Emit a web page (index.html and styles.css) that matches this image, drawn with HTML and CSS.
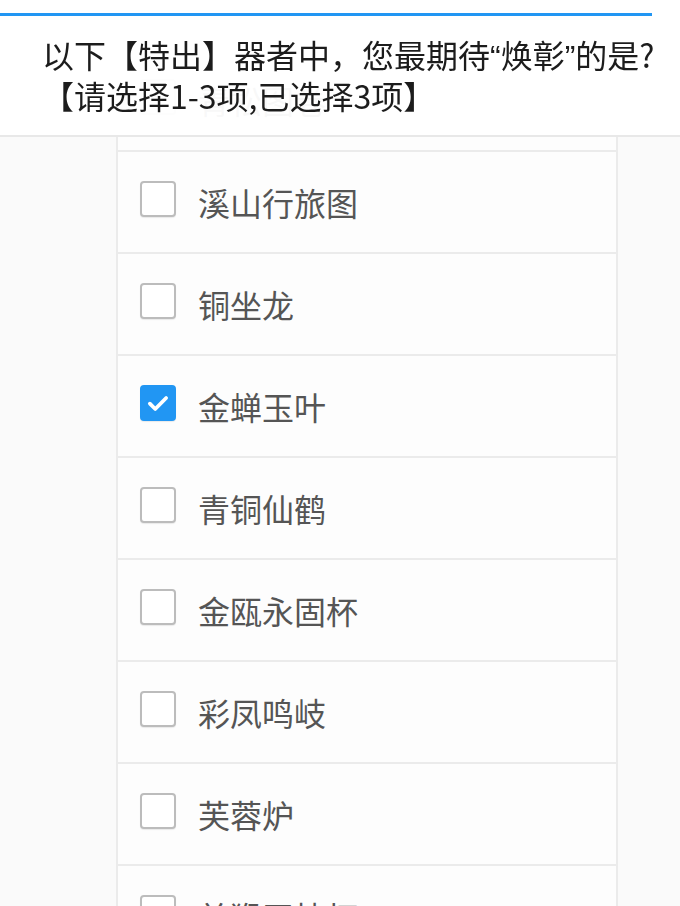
FILE: index.html
```html
<!DOCTYPE html>
<html lang="zh-CN">
<head>
<meta charset="utf-8">
<title>问卷</title>
<link rel="stylesheet" href="styles.css">
</head>
<body>
<header class="topbar">
  <div class="progress"></div>
  <h1 class="question">以下【特出】器者中，您最期待<span class="q">“</span>焕彰<span class="q">”</span>的是?<br>【请选择1-3项,已选择3项】</h1>
</header>
<main class="page">
  <ul class="options">
    <li class="option"><span class="box"></span><span class="label">青松图卷</span></li>
    <li class="option"><span class="box"></span><span class="label">溪山行旅图</span></li>
    <li class="option"><span class="box"></span><span class="label">铜坐龙</span></li>
    <li class="option"><span class="box checked"><svg viewBox="0 0 24 24" width="30" height="30"><path d="M5.5 12.5l4.3 4.3L18.5 8" fill="none" stroke="#fff" stroke-width="3" stroke-linecap="round" stroke-linejoin="round"/></svg></span><span class="label">金蝉玉叶</span></li>
    <li class="option"><span class="box"></span><span class="label">青铜仙鹤</span></li>
    <li class="option"><span class="box"></span><span class="label">金瓯永固杯</span></li>
    <li class="option"><span class="box"></span><span class="label">彩凤鸣岐</span></li>
    <li class="option"><span class="box"></span><span class="label">芙蓉炉</span></li>
    <li class="option"><span class="box"></span><span class="label">美猴玉枕杯</span></li>
  </ul>
</main>
</body>
</html>
```

FILE: styles.css
```css
html, body {
  margin: 0;
  padding: 0;
  background: #fafafa;
  font-family: "Noto Sans CJK SC", "Noto Sans", sans-serif;
  overflow: hidden;
}

.topbar {
  position: fixed;
  top: 0;
  left: 0;
  right: 0;
  height: 135px;
  background: rgba(255, 255, 255, 0.96);
  border-bottom: 2px solid #e8e8e8;
  z-index: 2;
}

.progress {
  margin-top: 13px;
  width: 652px;
  height: 3px;
  background: #2196f3;
}

.question {
  margin: 19px 0 0 42px;
  font-size: 32px;
  font-weight: 400;
  line-height: 38px;
  color: #1c1c1c;
  white-space: nowrap;
}

.q {
  font-family: "Liberation Sans", sans-serif;
}

.page {
  padding-top: 50px;
}

.options {
  list-style: none;
  margin: 0 0 0 116px;
  padding: 0;
  width: 498px;
  border-left: 2px solid #ebebeb;
  border-right: 2px solid #ebebeb;
  background: #fdfdfd;
}

.option {
  height: 100px;
  border-bottom: 2px solid #ebebeb;
  display: flex;
  align-items: center;
  padding-left: 22px;
  gap: 22px;
}

.box {
  width: 32px;
  height: 32px;
  border: 2px solid #bcbcbc;
  border-radius: 4px;
  background: #fff;
  box-shadow: 0 1px 1px rgba(0, 0, 0, 0.08);
  margin-bottom: 6px;
  flex: none;
  display: flex;
  align-items: center;
  justify-content: center;
}

.box.checked {
  background: #2196f3;
  border-color: #2196f3;
}

.label {
  font-size: 32px;
  color: #555;
  line-height: 40px;
}
```
